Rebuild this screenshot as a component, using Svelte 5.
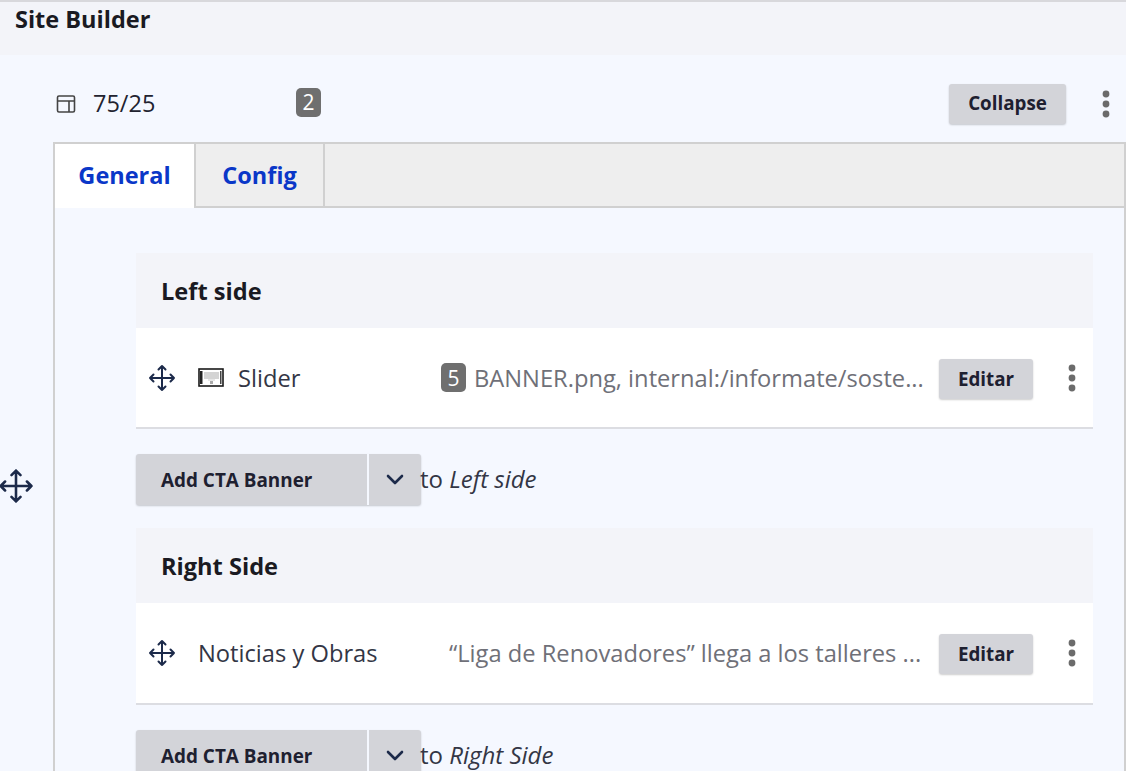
<script>
    const sections = [
        {
            title: 'Left side',
            name: 'Slider',
            icon: true,
            count: 5,
            summary: 'BANNER.png, internal:/informate/soste...'
        },
        {
            title: 'Right Side',
            name: 'Noticias y Obras',
            icon: false,
            count: 0,
            summary: '“Liga de Renovadores” llega a los talleres ...'
        }
    ];
</script>

{#snippet moveIcon(size)}
    <svg class="move" width={size} height={size} viewBox="0 0 28 28" fill="none" stroke="#1c2a4a" stroke-width="2" stroke-linecap="round" stroke-linejoin="round">
        <path d="M14 2v24M2 14h24M10.5 5.5 14 2l3.500 3.500M10.500 22.500 14 26l3.500-3.500M5.500 10.500 2 14l3.500 3.500M22.500 10.500 26 14l-3.500 3.500" />
    </svg>
{/snippet}

{#snippet dots()}
    <svg class="dots" width="8" height="28" viewBox="0 0 8 28" fill="#6b6b6b">
        <circle cx="4" cy="4" r="3.400" />
        <circle cx="4" cy="14" r="3.400" />
        <circle cx="4" cy="24" r="3.400" />
    </svg>
{/snippet}

<div class="page">
    <header class="title">Site Builder</header>

    <main class="panel">
        <div class="layout-row">
            <svg class="layout-icon" width="20" height="20" viewBox="0 0 20 20" fill="none" stroke="#444" stroke-width="1.600">
                <rect x="1.500" y="2" width="17" height="16" rx="1.500" />
                <path d="M1.500 7h17M13 7v11" />
            </svg>
            <span class="layout-name">75/25</span>
            <span class="count count-big">2</span>
            <button class="btn collapse">Collapse</button>
            {@render dots()}
        </div>

        <div class="body">
            <div class="handle">{@render moveIcon(36)}</div>

            <div class="tabs">
                <div class="tab-bar">
                    <span class="tab active">General</span>
                    <span class="tab">Config</span>
                </div>

                <div class="tab-content">
                    {#each sections as s}
                        <section class="region">
                            <h3>{s.title}</h3>
                            <div class="item">
                                {@render moveIcon(28)}
                                {#if s.icon}
                                    <svg class="slider-icon" width="26" height="19" viewBox="0 0 26 19">
                                        <rect x="1" y="1" width="24" height="17" fill="#fff" stroke="#1a1a1a" stroke-width="1.600" />
                                        <rect x="2" y="3" width="2.500" height="13" fill="#222" />
                                        <rect x="22" y="3" width="1.500" height="13" fill="#444" />
                                        <rect x="6" y="4" width="15" height="7" fill="#d4d4d4" />
                                        <rect x="10" y="11" width="7" height="2" fill="#e6e6e6" />
                                        <rect x="12" y="13" width="3" height="3" fill="#aaa" />
                                    </svg>
                                {/if}
                                <span class="item-name" class:has-icon={s.icon}>{s.name}</span>
                                <span class="summary" class:no-count={!s.count}>
                                    {#if s.count}<span class="count">{s.count}</span>{/if}
                                    <span class="summary-text">{s.summary}</span>
                                </span>
                                <button class="btn edit">Editar</button>
                                {@render dots()}
                            </div>
                            <div class="add">
                                <div class="split">
                                    <span class="split-main">Add CTA Banner</span>
                                    <span class="split-toggle">
                                        <svg width="20" height="13" viewBox="0 0 20 13" fill="none" stroke="#1c2a4a" stroke-width="2.600" stroke-linecap="round" stroke-linejoin="round">
                                            <path d="M3 3l7 7 7-7" />
                                        </svg>
                                    </span>
                                </div>
                                <span class="to">to <em>{s.title}</em></span>
                            </div>
                        </section>
                    {/each}
                </div>
            </div>
        </div>
    </main>
</div>

<style>
    :global(body) {
        margin: 0;
        background: #fff;
    }

    .page {
        width: 1126px;
        height: 771px;
        overflow: hidden;
        font-family: "Open Sans", "Noto Sans", sans-serif;
        color: #222330;
        background: #f5f8ff;
    }

    .title {
        height: 55px;
        box-sizing: border-box;
        padding: 3px 0 0 15px;
        background: #f3f4f9;
        border-top: 2px solid #d8d8dc;
        font-size: 23.500px;
        line-height: 28px;
        font-weight: 700;
        color: #1a1a22;
    }

    .panel {
        padding-top: 29px;
    }

    .layout-row {
        display: flex;
        align-items: center;
        height: 40px;
        padding-left: 56px;
    }

    .layout-icon {
        margin-right: 17px;
    }

    .layout-name {
        width: 203px;
        margin-bottom: 2px;
        font-size: 23.500px;
        line-height: 38px;
    }

    .count {
        display: inline-flex;
        align-items: center;
        justify-content: center;
        flex: none;
        width: 25px;
        height: 29px;
        border-radius: 5px;
        background: #6f6f6f;
        color: #fff;
        font-size: 21px;
    }

    .count-big {
        margin-bottom: 4px;
    }

    .btn {
        border: none;
        border-radius: 3px;
        background: #d3d4d9;
        box-shadow: 0 1px 2px rgba(0, 0, 0, 0.2);
        font-family: inherit;
        font-weight: 700;
        color: #1e2030;
    }

    .collapse {
        width: 117px;
        height: 40px;
        margin-left: auto;
        padding-bottom: 3px;
        font-size: 18.800px;
    }

    .layout-row .dots {
        margin: 0 16px 0 36px;
    }

    .body {
        display: flex;
        margin-top: 18px;
    }

    .handle {
        display: flex;
        flex: none;
        width: 53px;
        padding-top: 326px;
        box-sizing: border-box;
    }

    .handle .move {
        margin-left: -2px;
    }

    .tabs {
        flex: 1;
        box-sizing: border-box;
        border: 2px solid #d0d0d0;
        border-bottom: none;
    }

    .tab-bar {
        display: flex;
        height: 62px;
        background: #eeeeee;
        border-bottom: 2px solid #d0d0d0;
    }

    .tab {
        display: flex;
        align-items: center;
        justify-content: center;
        box-sizing: border-box;
        width: 129px;
        height: 62px;
        border-right: 2px solid #d0d0d0;
        font-size: 23.500px;
        font-weight: 700;
        color: #0a37c8;
    }

    .tab.active {
        width: 141px;
        height: 64px;
        padding-bottom: 2px;
        background: #fff;
    }

    .tab-content {
        padding: 45px 31px 0 81px;
    }

    .region h3 {
        box-sizing: border-box;
        height: 75px;
        margin: 0;
        padding: 0 25px;
        display: flex;
        align-items: center;
        background: #f3f4f9;
        font-size: 23.600px;
        font-weight: 700;
        color: #1a1a22;
    }

    .item {
        display: flex;
        align-items: center;
        box-sizing: border-box;
        height: 101px;
        padding: 0 17px 0 12px;
        background: #fff;
        border-bottom: 2px solid #dcdde2;
    }

    .region + .region .item {
        height: 102px;
    }

    .slider-icon {
        margin-left: 22px;
    }

    .item-name {
        margin-left: 22px;
        flex: none;
        font-size: 23.700px;
        color: #333645;
    }

    .item-name.has-icon {
        margin-left: 14px;
    }

    .summary {
        display: flex;
        align-items: center;
        gap: 8px;
        box-sizing: border-box;
        width: 490px;
        margin-left: auto;
        flex: none;
        white-space: nowrap;
        overflow: hidden;
        font-size: 23.700px;
        color: #6f7078;
    }

    .summary.no-count {
        padding-left: 8px;
    }

    .edit {
        flex: none;
        width: 94px;
        height: 40px;
        margin: 2px 0 0 8px;
        font-size: 18.800px;
    }

    .item .dots {
        margin-left: 35px;
    }

    .add {
        display: flex;
        align-items: center;
        padding: 25px 0 23px;
    }

    .split {
        display: flex;
        flex: none;
        width: 285px;
        height: 51px;
        border-radius: 3px;
        background: #d3d4d9;
        box-shadow: 0 1px 2px rgba(0, 0, 0, 0.2);
        font-size: 18.900px;
        font-weight: 700;
        color: #1e2030;
    }

    .split-main {
        display: flex;
        align-items: center;
        width: 233px;
        box-sizing: border-box;
        padding-left: 25px;
        border-right: 2px solid #f5f8ff;
    }

    .split-toggle {
        display: flex;
        flex: 1;
        align-items: center;
        justify-content: center;
    }

    .to {
        margin: 0 0 2px -1px;
        font-size: 24px;
        color: #333645;
    }

    .move {
        flex: none;
    }
</style>
